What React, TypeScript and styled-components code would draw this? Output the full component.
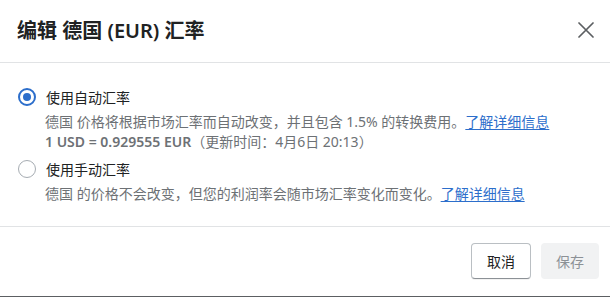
import React from "react";
import styled, { createGlobalStyle } from "styled-components";

const Global = createGlobalStyle`
  html, body { margin: 0; padding: 0; background: #ffffff; }
  body { font-family: "Noto Sans", "Noto Sans CJK SC", sans-serif; color: #202223; }
  * { box-sizing: border-box; }
`;

const Dialog = styled.div`
  width: 610px;
  height: 297px;
  display: flex;
  flex-direction: column;
  background: #fff;
  border-bottom: 1px solid #5c5f62;
`;

const Header = styled.div`
  height: 63px;
  display: flex;
  align-items: center;
  justify-content: space-between;
  padding: 0 16px 0 17px;
  border-bottom: 1px solid #e1e3e5;
`;

const Title = styled.h2`
  margin: 0;
  font-size: 20px;
  font-weight: 600;
  color: #202223;
  letter-spacing: 0;
  padding-bottom: 4px;
`;

const CloseButton = styled.button`
  border: 0;
  background: transparent;
  padding: 0;
  width: 16px;
  height: 18px;
  display: flex;
  align-items: center;
  justify-content: center;
  cursor: pointer;
  margin-bottom: 3px;
`;

const Body = styled.div`
  flex: 1;
  padding: 23px 17px 0 18px;
  display: flex;
  flex-direction: column;
  gap: 6px;
  border-bottom: 1px solid #e1e3e5;
`;

const Option = styled.div`
  display: flex;
  flex-direction: column;
`;

const OptionRow = styled.label`
  display: flex;
  align-items: center;
  gap: 10px;
  height: 22px;
  font-size: 14px;
  color: #202223;
`;

const Radio = styled.span<{ $checked?: boolean }>`
  width: 18px;
  height: 18px;
  border-radius: 50%;
  border: ${(p) => (p.$checked ? "2px solid #2c6ecb" : "1.5px solid #a6acb2")};
  display: flex;
  align-items: center;
  justify-content: center;
  flex-shrink: 0;
  &::after {
    content: "";
    width: 8px;
    height: 8px;
    border-radius: 50%;
    background: #2c6ecb;
    display: ${(p) => (p.$checked ? "block" : "none")};
  }
`;

const Help = styled.div`
  padding-left: 27px;
  font-size: 14px;
  line-height: 20px;
  color: #6d7175;
  margin-top: 4px;
`;

const Strong = styled.span`
  font-weight: 600;
`;

const Link = styled.a`
  color: #2c6ecb;
  text-decoration: underline;
  text-underline-offset: 2px;
`;

const Footer = styled.div`
  height: 69px;
  display: flex;
  align-items: center;
  justify-content: flex-end;
  gap: 10px;
  padding: 0 11px 2px 0;
`;

const Button = styled.button<{ $disabled?: boolean }>`
  height: 36px;
  padding: 0 15px;
  border-radius: 4px;
  font-family: inherit;
  font-size: 14px;
  cursor: pointer;
  border: ${(p) => (p.$disabled ? "0" : "1px solid #babfc3")};
  border-bottom-color: ${(p) => (p.$disabled ? "transparent" : "#8c9196")};
  background: ${(p) => (p.$disabled ? "#f1f2f3" : "#ffffff")};
  color: ${(p) => (p.$disabled ? "#8c9196" : "#202223")};
  box-shadow: ${(p) => (p.$disabled ? "none" : "0 1px 0 rgba(0,0,0,0.05)")};
`;

export default function App() {
  return (
    <>
      <Global />
      <Dialog>
        <Header>
          <Title>编辑 德国 (EUR) 汇率</Title>
          <CloseButton aria-label="关闭">
            <svg width="16" height="16" viewBox="0 0 16 16">
              <path d="M1 1 L15 15 M15 1 L1 15" stroke="#5c5f62" strokeWidth="1.7" strokeLinecap="round" />
            </svg>
          </CloseButton>
        </Header>
        <Body>
          <Option>
            <OptionRow>
              <Radio $checked />
              使用自动汇率
            </OptionRow>
            <Help>
              德国 价格将根据市场汇率而自动改变，并且包含 1.5% 的转换费用。<Link>了解详细信息</Link>
              <br />
              <Strong>1 USD = 0.929555 EUR</Strong>（更新时间：4月6日 20:13）
            </Help>
          </Option>
          <Option>
            <OptionRow>
              <Radio />
              使用手动汇率
            </OptionRow>
            <Help>
              德国 的价格不会改变，但您的利润率会随市场汇率变化而变化。<Link>了解详细信息</Link>
            </Help>
          </Option>
        </Body>
        <Footer>
          <Button>取消</Button>
          <Button $disabled>保存</Button>
        </Footer>
      </Dialog>
    </>
  );
}
